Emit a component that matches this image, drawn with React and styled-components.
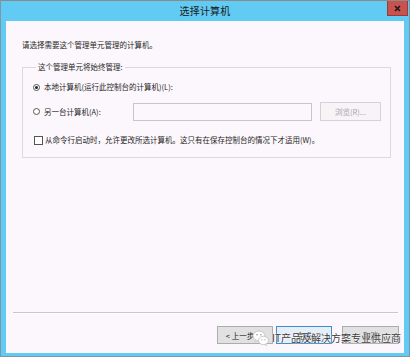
import React from 'react'
import styled, { createGlobalStyle } from 'styled-components'

const Global = createGlobalStyle`
  html, body { margin: 0; padding: 0; background: #ffffff; }
  body { font-family: "Noto Sans CJK SC", "Noto Sans", sans-serif; }
`

const font = `"Noto Sans CJK SC", "Noto Sans", sans-serif`

const Frame = styled.div`
  position: relative;
  width: 410px;
  height: 357px;
  box-sizing: border-box;
  border: 1px solid #7d97a6;
  border-top-color: #8a8a8a;
  background: #62cbf3;
  display: flex;
  flex-direction: column;
`

const TitleBar = styled.div`
  height: 20px;
  display: grid;
  grid-template-columns: 1fr auto 1fr;
  align-items: start;
`

const Title = styled.div`
  grid-column: 2;
  font-family: ${font};
  font-size: 10px;
  line-height: 20px;
  color: #1a1a1a;
  letter-spacing: 0.2px;
`

const Close = styled.div`
  grid-column: 3;
  justify-self: end;
  width: 21px;
  height: 15px;
  margin-right: 1px;
  box-sizing: border-box;
  background: #c9524f;
  border: 1px solid #9a3b3a;
  border-top: none;
  display: flex;
  align-items: center;
  justify-content: center;
`

const Body = styled.div`
  flex: 1;
  margin: 0 5px 3px 5px;
  background: #fcf7fc;
  display: flex;
  flex-direction: column;
  font-family: ${font};
  font-size: 7.5px;
  color: #1f1f1f;
`

const Intro = styled.div`
  margin: 19px 0 0 16px;
  line-height: 10px;
`

const Group = styled.fieldset`
  margin: 12px 13px 0 16px;
  padding: 8px 0 11px 10px;
  border: 1px solid #dcd8dc;
  display: flex;
  flex-direction: column;
  min-width: 0;
`

const Legend = styled.legend`
  padding: 0 2px;
  margin-left: 3px;
  line-height: 10px;
`

const Row = styled.div`
  display: flex;
  align-items: center;
  height: ${({ $h }) => $h}px;
  margin-top: ${({ $mt }) => $mt || 0}px;
`

const Radio = styled.span`
  width: 7px;
  height: 7px;
  box-sizing: border-box;
  border-radius: 50%;
  border: 1px solid #555;
  background: #fff;
  display: flex;
  align-items: center;
  justify-content: center;
  margin-right: 4px;
  &::after {
    content: '';
    width: 3px;
    height: 3px;
    border-radius: 50%;
    background: ${({ $on }) => ($on ? '#222' : 'transparent')};
  }
`

const Check = styled.span`
  width: 9px;
  height: 9px;
  box-sizing: border-box;
  border: 1px solid #555;
  background: #fff;
  margin: 0 2px 0 1px;
`

const Label = styled.span`
  line-height: 10px;
  white-space: nowrap;
  width: ${({ $w }) => ($w ? `${$w}px` : 'auto')};
`

const Input = styled.div`
  width: 179px;
  height: 18px;
  box-sizing: border-box;
  border: 1px solid #c9c6c9;
  background: #fcf7fc;
`

const Browse = styled.div`
  width: 61px;
  height: 19px;
  margin-left: 8px;
  box-sizing: border-box;
  border: 1px solid #d4d2d4;
  background: #f7f3f7;
  color: #a9a7a9;
  display: flex;
  align-items: center;
  justify-content: center;
`

const Spacer = styled.div`flex: 1;`

const Separator = styled.div`
  margin: 0 6px 0 7px;
  height: 1px;
  background: #c8c6c8;
  border-bottom: 1px solid #ffffff;
`

const Buttons = styled.div`
  display: flex;
  justify-content: flex-end;
  padding: 12px 5px 9px 0;
`

const Button = styled.div`
  width: ${({ $w }) => $w || 56}px;
  height: 18px;
  margin-left: ${({ $ml }) => $ml || 0}px;
  box-sizing: border-box;
  border: 1px solid ${({ $focus }) => ($focus ? '#3f8ccf' : '#adadad')};
  background: ${({ $focus }) => ($focus ? '#e6eef7' : '#e1e1e1')};
  display: flex;
  align-items: center;
  justify-content: center;
  color: #222;
`

const Watermark = styled.div`
  position: absolute;
  left: 251px;
  top: 327px;
  display: flex;
  align-items: center;
  gap: 2px;
  font-family: ${font};
  font-size: 10px;
  line-height: 20px;
  color: #3a3a3a;
  text-shadow: 0 0 1px #fff, 0 0 2px #fff;
  white-space: nowrap;
`

const WeChat = () => (
  <svg width="18" height="18" viewBox="0 0 18 18">
    <ellipse cx="7" cy="7" rx="6" ry="5" fill="#fff" stroke="#bdbdbd" strokeWidth="0.8" />
    <path d="M3.5 10.5 L3 13 L5.5 11.5 Z" fill="#fff" stroke="#bdbdbd" strokeWidth="0.6" />
    <ellipse cx="11.5" cy="11.5" rx="5" ry="4.2" fill="#fff" stroke="#bdbdbd" strokeWidth="0.8" />
    <path d="M14 14.8 L15 17 L12.5 15.5 Z" fill="#fff" stroke="#bdbdbd" strokeWidth="0.6" />
    <circle cx="5" cy="5.8" r="0.8" fill="#9a9a9a" />
    <circle cx="8.8" cy="5.8" r="0.8" fill="#9a9a9a" />
    <circle cx="10" cy="10.8" r="0.6" fill="#9a9a9a" />
    <circle cx="13" cy="10.8" r="0.6" fill="#9a9a9a" />
  </svg>
)

const App = () =>
  <Frame>
    <Global />
    <TitleBar>
      <Title>选择计算机</Title>
      <Close>
        <svg width="7" height="7" viewBox="0 0 7 7">
          <path d="M1 1 L6 6 M6 1 L1 6" stroke="#1a1a1a" strokeWidth="1.6" />
        </svg>
      </Close>
    </TitleBar>
    <Body>
      <Intro>请选择需要这个管理单元管理的计算机。</Intro>
      <Group>
        <Legend>这个管理单元将始终管理:</Legend>
        <Row $h={14}>
          <Radio $on />
          <Label>本地计算机(运行此控制台的计算机)(L):</Label>
        </Row>
        <Row $h={19} $mt={8}>
          <Radio />
          <Label $w={89}>另一台计算机(A):</Label>
          <Input />
          <Browse>浏览(R)...</Browse>
        </Row>
        <Row $h={12} $mt={13}>
          <Check />
          <Label>从命令行启动时，允许更改所选计算机。这只有在保存控制台的情况下才适用(W)。</Label>
        </Row>
      </Group>
      <Spacer />
      <Separator />
      <Buttons>
        <Button>&lt; 上一步(B)</Button>
        <Button $focus $ml={3}>完成</Button>
        <Button $w={57} $ml={10}>取消</Button>
      </Buttons>
    </Body>
    <Watermark>
      <WeChat />
      <span>IT产品及解决方案专业供应商</span>
    </Watermark>
  </Frame>

export default App
